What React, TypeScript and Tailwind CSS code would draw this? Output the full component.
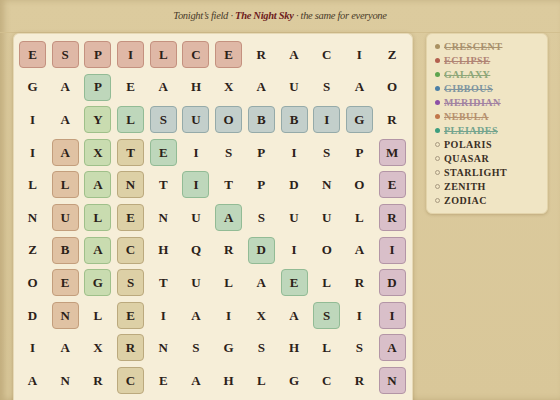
import React from 'react';

const GRID = [
  'ESPILCERACIZ',
  'GAPEAHXAUSAO',
  'IAYLSUOBBIGR',
  'IAXTEISPISPM',
  'LLANTITPDNOE',
  'NULENUASUULR',
  'ZBACHQRDIOAI',
  'OEGSTULAELRD',
  'DNLEIAIXASII',
  'IAXRNSGSHLSA',
  'ANRCEAHLGCRN',
];

type Tone = 'red' | 'green' | 'teal' | 'blue' | 'tan' | 'purple' | 'orange';

const toneClass: Record<Tone, string> = {
  red: 'bg-[#dfb8a6] border-[#c4917f]',
  green: 'bg-[#c9dcb0] border-[#9fc08a]',
  teal: 'bg-[#bed7bb] border-[#92bb95]',
  blue: 'bg-[#c3cfcb] border-[#95aaa9]',
  tan: 'bg-[#ddd0a6] border-[#bba97d]',
  purple: 'bg-[#d9bfc9] border-[#b395a6]',
  orange: 'bg-[#e0c2a3] border-[#c39e7c]',
};

const marks: Record<string, Tone> = {};
const put = (cells: [number, number][], t: Tone) => cells.forEach(([r, c]) => (marks[`${r}-${c}`] = t));
put([0, 1, 2, 3, 4, 5, 6].map((c) => [0, c] as [number, number]), 'red');
put([4, 5, 6, 7, 8, 9, 10].map((c) => [2, c] as [number, number]), 'blue');
put([2, 3, 4, 5, 6, 7].map((r) => [r, 2] as [number, number]), 'green');
put([3, 4, 5, 6, 7, 8].map((r) => [r, 1] as [number, number]), 'orange');
put([3, 4, 5, 6, 7, 8, 9, 10].map((r) => [r, 3] as [number, number]), 'tan');
put([3, 4, 5, 6, 7, 8, 9, 10].map((r) => [r, 11] as [number, number]), 'purple');
put([0, 1, 2, 3, 4, 5, 6, 7].map((i) => [1 + i, 2 + i] as [number, number]), 'teal');

const words = [
  { w: 'CRESCENT', dot: 'bg-[#a99162]', text: 'text-[#a8916e] decoration-[#a8916e]', found: true },
  { w: 'ECLIPSE', dot: 'bg-[#b3604f]', text: 'text-[#b08474] decoration-[#b08474]', found: true },
  { w: 'GALAXY', dot: 'bg-[#5ea44f]', text: 'text-[#8ea779] decoration-[#8ea779]', found: true },
  { w: 'GIBBOUS', dot: 'bg-[#4c7fa6]', text: 'text-[#7f95a0] decoration-[#7f95a0]', found: true },
  { w: 'MERIDIAN', dot: 'bg-[#8d50a6]', text: 'text-[#a283a2] decoration-[#a283a2]', found: true },
  { w: 'NEBULA', dot: 'bg-[#c1764a]', text: 'text-[#b6916f] decoration-[#b6916f]', found: true },
  { w: 'PLEIADES', dot: 'bg-[#3d9e7e]', text: 'text-[#74a48e] decoration-[#74a48e]', found: true },
  { w: 'POLARIS', found: false },
  { w: 'QUASAR', found: false },
  { w: 'STARLIGHT', found: false },
  { w: 'ZENITH', found: false },
  { w: 'ZODIAC', found: false },
];

const serif = { fontFamily: '"Liberation Serif", "DejaVu Serif", serif' };

export default function App() {
  return (
    <div
      className="h-[400px] w-[560px] overflow-hidden bg-gradient-to-b from-[#dccb9e] to-[#d9c799] shadow-[inset_4px_0_6px_rgba(120,90,40,0.25)]"
      style={serif}
    >
      {/* Header */}
      <div className="flex h-[33px] items-center justify-center border-b border-[#d2bf8f] text-[10.5px] italic tracking-[-0.3px] text-[#4a3b2a]">
        <span>Tonight’s field ·&nbsp;</span>
        <span className="font-bold text-[#6e1c1c]">The Night Sky</span>
        <span>&nbsp;· the same for everyone</span>
      </div>

      <div className="flex items-start">
        {/* Letter grid */}
        <div className="ml-[13px] h-[380px] w-[400px] rounded-t-[6px] border border-b-0 border-[#e6d9b6] bg-[#f6eed8] pl-[5px] pt-[7px] shadow-[0_1px_4px_rgba(110,80,30,0.3)]">
          <div className="grid grid-cols-[repeat(12,27px)] gap-x-[5.7px] gap-y-[5.6px]">
            {GRID.map((row, r) =>
              row.split('').map((ch, c) => {
                const t = marks[`${r}-${c}`];
                return (
                  <div
                    key={`${r}-${c}`}
                    className={`flex h-[27px] w-[27px] items-center justify-center rounded-[4px] border text-[13px] font-bold text-[#2b2118] ${
                      t ? toneClass[t] : 'border-transparent'
                    }`}
                  >
                    {ch}
                  </div>
                );
              })
            )}
          </div>
        </div>

        {/* Word list */}
        <div className="ml-[13px] w-[122px] rounded-[6px] border border-[#e3d4ab] bg-[#f0e5c4] pb-[6px] pl-[8px] pt-[5px] shadow-[0_1px_3px_rgba(110,80,30,0.25)]">
          {words.map((w) => (
            <div key={w.w} className="flex h-[14px] items-center">
              {w.found ? (
                <span className={`h-[5px] w-[5px] rounded-full ${w.dot}`} />
              ) : (
                <span className="h-[5px] w-[5px] rounded-full border border-[#a89a80]" />
              )}
              <span
                className={`ml-[4px] text-[10px] font-bold tracking-[0.5px] ${
                  w.found ? `line-through ${w.text}` : 'text-[#3a2f24]'
                }`}
              >
                {w.w}
              </span>
            </div>
          ))}
        </div>
      </div>
    </div>
  );
}
